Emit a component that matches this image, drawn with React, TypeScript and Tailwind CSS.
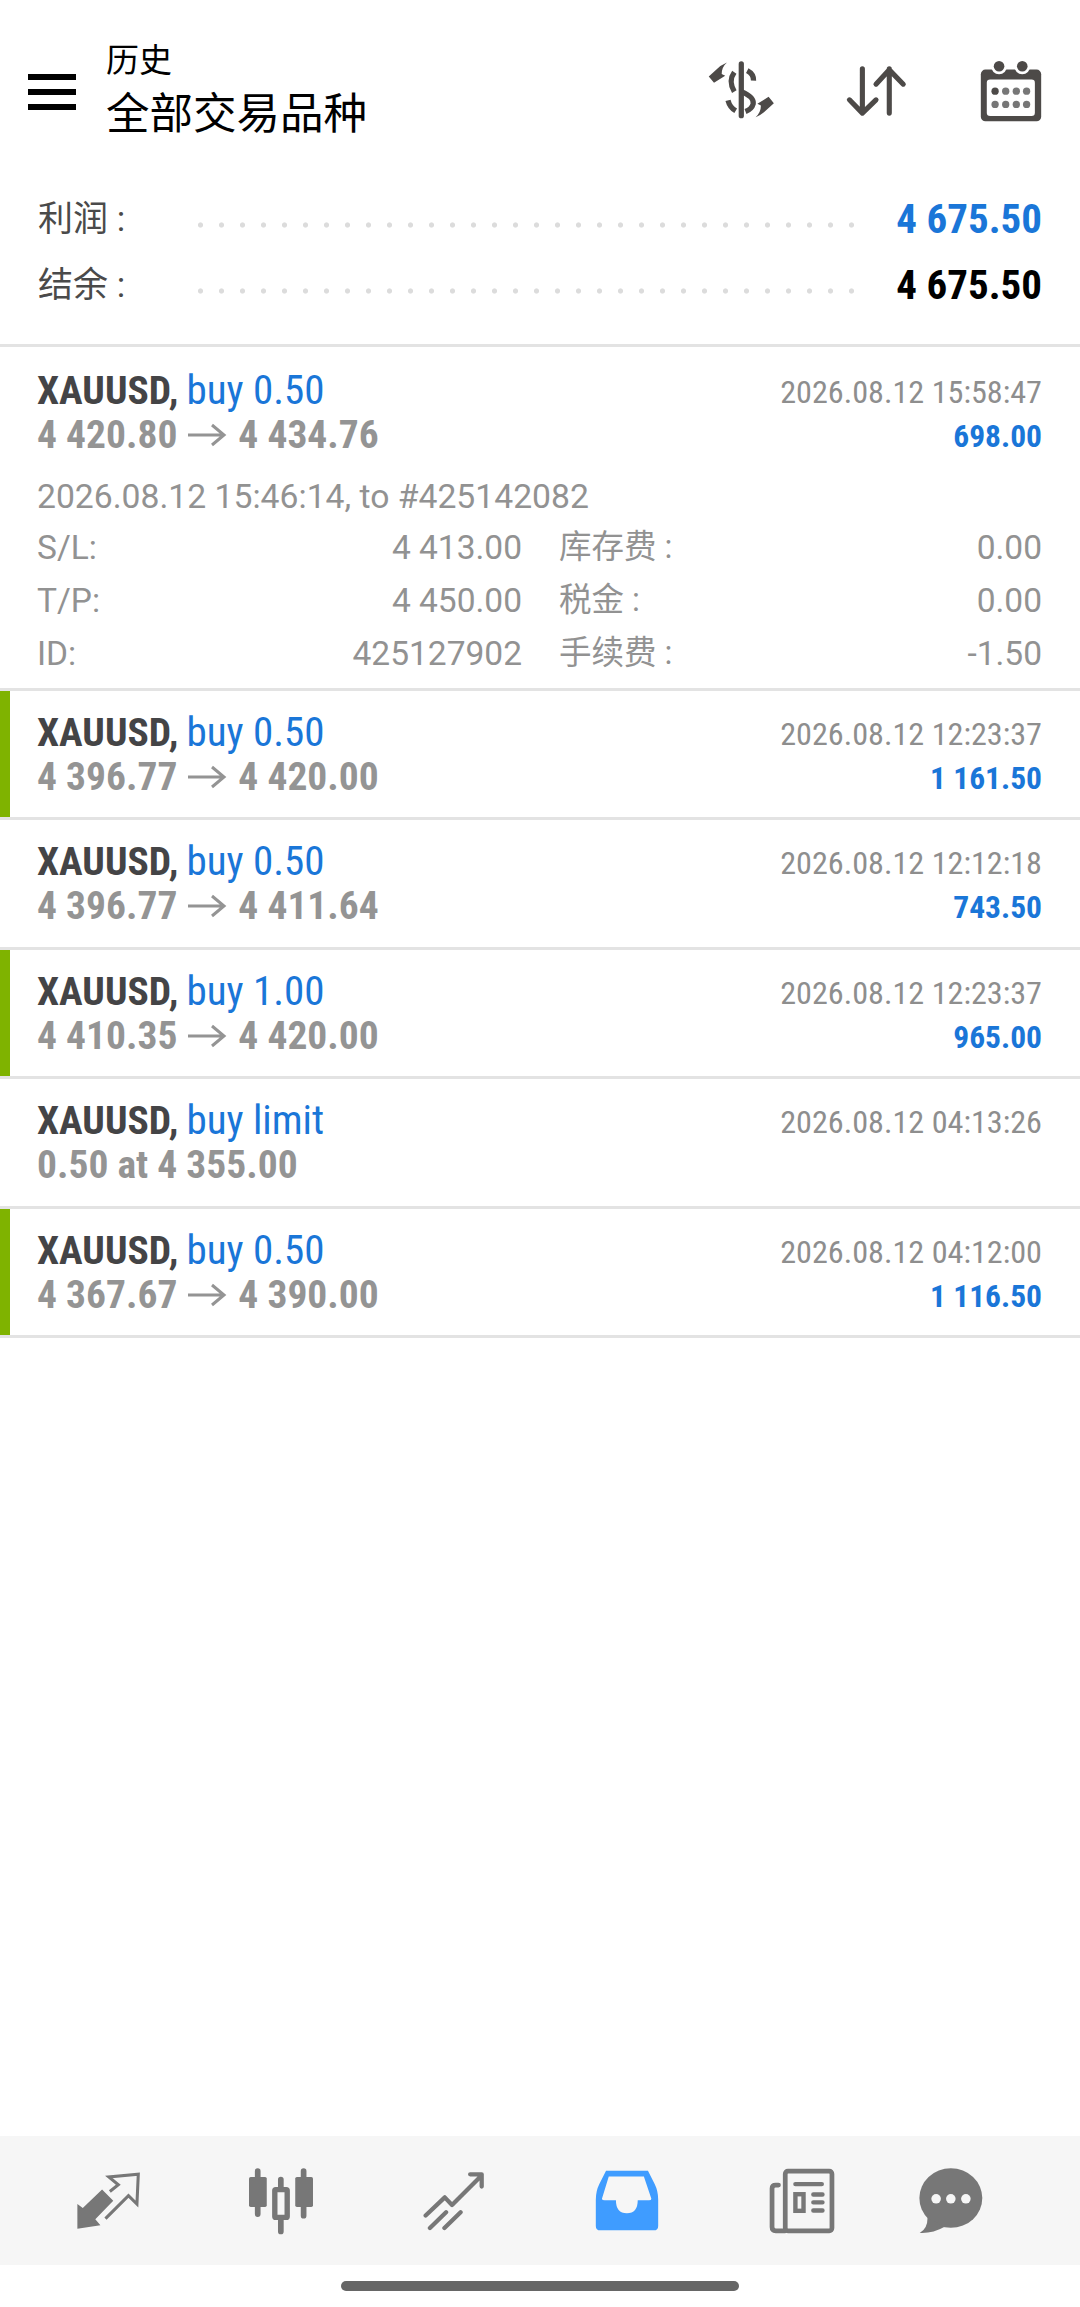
import React from 'react';

const cjk = '"Noto Sans CJK SC"';

interface Trade {
  side: string;
  time: string;
  from?: string;
  to?: string;
  plain?: string;
  profit?: string;
  bar?: boolean;
}

const trades: Trade[] = [
  { side: 'buy 0.50', time: '2026.08.12 12:23:37', from: '4 396.77', to: '4 420.00', profit: '1 161.50', bar: true },
  { side: 'buy 0.50', time: '2026.08.12 12:12:18', from: '4 396.77', to: '4 411.64', profit: '743.50' },
  { side: 'buy 1.00', time: '2026.08.12 12:23:37', from: '4 410.35', to: '4 420.00', profit: '965.00', bar: true },
  { side: 'buy limit', time: '2026.08.12 04:13:26', plain: '0.50 at 4 355.00' },
  { side: 'buy 0.50', time: '2026.08.12 04:12:00', from: '4 367.67', to: '4 390.00', profit: '1 116.50', bar: true },
];

function Arrow() {
  return (
    <svg width="40" height="24" viewBox="0 0 40 24" className="mr-[11px] ml-[10px] inline-block" fill="none" stroke="#949494" strokeWidth="3">
      <path d="M1 12H37M25 2L37 12L25 22" />
    </svg>
  );
}

function TradeHead({ trade }: { trade: Trade }) {
  return (
    <div className="flex justify-between">
      <div>
        <div className="h-[46px] text-[41px] leading-[46px] whitespace-nowrap">
          <span className="text-[39.5px] font-bold text-[#444446]">XAUUSD,</span>
          <span className="ml-[8px] text-[#1a76d8]">{trade.side}</span>
        </div>
        <div className="flex h-[44px] items-center text-[39.5px] leading-[44px] font-bold whitespace-nowrap text-[#949494]">
          {trade.plain ? trade.plain : (
            <>
              {trade.from}
              <Arrow />
              {trade.to}
            </>
          )}
        </div>
      </div>
      <div className="text-right">
        <div className="h-[46px] pt-[2px] text-[32.2px] leading-[46px] whitespace-nowrap text-[#8e8e8e]">{trade.time}</div>
        {trade.profit && (
          <div className="h-[44px] pt-[2px] text-[31.5px] leading-[44px] font-bold text-[#1a76d8]">{trade.profit}</div>
        )}
      </div>
    </div>
  );
}

function TradeRow({ trade }: { trade: Trade }) {
  return (
    <div className="flex h-[129.4px] border-b-[3px] border-[#e3e3e3] [font-stretch:75%]">
      <div className={`w-[10px] ${trade.bar ? 'bg-[#7fb300]' : ''}`} />
      <div className="flex-1 pt-[18px] pr-[38px] pl-[27px]">
        <TradeHead trade={trade} />
      </div>
    </div>
  );
}

function DetailRow({ label, value, label2, value2 }: { label: string; value: string; label2: string; value2: string }) {
  return (
    <div className="flex h-[53px] items-center text-[33.5px] text-[#929292]">
      <div className="flex w-[485px] justify-between">
        <span>{label}</span>
        <span>{value}</span>
      </div>
      <div className="ml-[37px] flex flex-1 justify-between">
        <span className="text-[32.5px]">{label2}</span>
        <span>{value2}</span>
      </div>
    </div>
  );
}

function SummaryRow({ label, value, color }: { label: string; value: string; color: string }) {
  return (
    <div className="flex h-[66px] items-center pr-[38px] pl-[38px]">
      <div className="w-[152px] text-[35px] text-[#4a4a4a]">{label}</div>
      <div className="mt-[10px] h-[6px] w-[672px] bg-[radial-gradient(circle,#dcdcdc_2.2px,transparent_3px)] bg-[length:21px_6px]" />
      <div className={`flex-1 text-right text-[41px] font-bold whitespace-nowrap [font-stretch:75%] ${color}`}>{value}</div>
    </div>
  );
}

function IconSwap() {
  return (
    <svg width="70" height="58" viewBox="80 68 200 165" fill="#4d4a48" className="mb-[4px]">
      <g fill="none" stroke="#4d4a48" strokeWidth="15">
        <path d="M178 76V224" strokeLinecap="round" />
        <path d="M195 95Q214 105 213 124M158 100Q140 125 158 155M178 155Q215 170 212 190Q208 205 190 212M140 180Q145 200 162 210" />
      </g>
      <path d="M85 112L107 92Q118 80 137 72Q122 85 122 105L132 110L100 130Z" />
      <path d="M271 188L249 208Q238 220 219 228Q234 215 234 195L224 190L256 170Z" />
    </svg>
  );
}

function IconSort() {
  return (
    <svg width="62" height="52" viewBox="495 78 182 150" fill="none" stroke="#4d4a48" strokeWidth="15" strokeLinecap="round" strokeLinejoin="round">
      <path d="M546 85V215M508 176L546 215L586 176M625 85V215M586 130L625 88L666 130" />
    </svg>
  );
}

function IconCalendar() {
  return (
    <svg width="62" height="63" viewBox="898 50 186 190" className="mb-[4px]">
      <rect x="900" y="82" width="182" height="156" rx="14" fill="#4d4a48" />
      <rect x="918" y="112" width="145" height="110" rx="10" fill="#fff" />
      <circle cx="955" cy="72" r="24" fill="#fff" />
      <circle cx="1025" cy="72" r="24" fill="#fff" />
      <circle cx="955" cy="72" r="16" fill="#4d4a48" />
      <circle cx="1025" cy="72" r="16" fill="#4d4a48" />
      {[147, 187].map((cy) =>
        [943, 975, 1007, 1038].map((cx) => <circle key={`${cx}-${cy}`} cx={cx} cy={cy} r="11" fill={cx === 943 && cy === 147 ? '#4d4a48' : '#777'} />),
      )}
    </svg>
  );
}

function NavTransfer() {
  return (
    <svg width="66" height="60" viewBox="215 155 195 172" fill="#777">
      <path d="M222 250L238 262L295 207L328 240L275 295L290 313L222 323Z" />
      <path d="M305 293L373 225L398 250L402 162L315 170L343 193L318 213" fill="none" stroke="#777" strokeWidth="9" />
    </svg>
  );
}

function NavCandles() {
  return (
    <svg width="66" height="68" viewBox="715 140 197 198" fill="#777">
      <path d="M744 150V278M813 175V330M881 150V283" stroke="#777" strokeWidth="17" strokeLinecap="round" />
      <rect x="718" y="167" width="53" height="90" rx="5" />
      <rect x="856" y="167" width="53" height="90" rx="5" />
      <rect x="795" y="205" width="37" height="83" rx="3" fill="#f6f6f6" stroke="#777" strokeWidth="16" />
    </svg>
  );
}

function NavTrend() {
  return (
    <svg width="64" height="60" viewBox="1220 145 192 182" fill="none" stroke="#777" strokeWidth="13" strokeLinecap="round" strokeLinejoin="round">
      <path d="M1230 280L1288 225L1310 248L1398 160M1365 155H1400V192M1243 318L1292 270M1287 318L1336 270" />
    </svg>
  );
}

function NavInbox() {
  return (
    <svg width="64" height="61" viewBox="160 148 187 179">
      <path d="M192 150H315L335 190Q345 210 345 235V312Q345 325 332 325H175Q162 325 162 312V235Q162 210 172 190Z" fill="#3f9cff" />
      <path d="M200 167H303L325 232Q325 237 318 237H285Q285 275 253 275Q221 275 221 237H188Q180 237 180 232Z" fill="#f6f6f6" />
    </svg>
  );
}

function NavNews() {
  return (
    <svg width="66" height="66" viewBox="662 140 195 194" fill="none" stroke="#777" strokeWidth="14" strokeLinecap="round">
      <rect x="710" y="149" width="138" height="176" rx="8" />
      <path d="M690 190H682Q671 190 671 200V314Q671 325 682 325H710" />
      <path d="M740 187H818M793 218H820M793 241H820M793 265H820" strokeWidth="13" />
      <rect x="740" y="217" width="24" height="49" strokeWidth="13" strokeLinecap="butt" />
    </svg>
  );
}

function NavChat() {
  return (
    <svg width="64" height="66" viewBox="1100 140 187 193" fill="#777">
      <ellipse cx="1193" cy="228" rx="92" ry="87" />
      <path d="M1125 285Q1125 318 1102 330Q1140 332 1175 312Z" />
      <circle cx="1150" cy="230" r="14" fill="#f6f6f6" />
      <circle cx="1193" cy="230" r="14" fill="#f6f6f6" />
      <circle cx="1237" cy="230" r="14" fill="#f6f6f6" />
    </svg>
  );
}

export default function App() {
  return (
    <div className="flex h-[2307px] w-[1080px] flex-col bg-white" style={{ fontFamily: `Roboto, ${cjk}, sans-serif` }}>
      <header className="flex h-[158px] items-center pt-[26px] pr-[38px] pl-[28px]">
        <div className="mr-[30px] flex h-[36px] w-[48px] flex-col justify-between">
          <div className="h-[6px] bg-black" />
          <div className="h-[6px] bg-black" />
          <div className="h-[6px] bg-black" />
        </div>
        <div className="flex-1">
          <div className="text-[33px] leading-[46px] text-black">历史</div>
          <div className="text-[43.5px] leading-[62px] text-black">全部交易品种</div>
        </div>
        <div className="flex items-center">
          <IconSwap />
          <div className="ml-[68px]"><IconSort /></div>
          <div className="ml-[73px]"><IconCalendar /></div>
        </div>
      </header>
      <section className="flex h-[186px] flex-col pt-[29px]">
        <SummaryRow label="利润 :" value="4 675.50" color="text-[#1a76d8]" />
        <SummaryRow label="结余 :" value="4 675.50" color="text-black" />
      </section>
      <div className="h-[347px] border-y-[3px] border-[#e3e3e3] pt-[20px] pr-[38px] pl-[37px]">
        <div className="[font-stretch:75%]">
          <TradeHead trade={{ side: 'buy 0.50', time: '2026.08.12 15:58:47', from: '4 420.80', to: '4 434.76', profit: '698.00' }} />
        </div>
        <div className="mt-[15px] h-[50px] text-[33.7px] leading-[50px] text-[#929292]">2026.08.12 15:46:14, to #425142082</div>
        <div>
          <DetailRow label="S/L:" value="4 413.00" label2="库存费 :" value2="0.00" />
          <DetailRow label="T/P:" value="4 450.00" label2="税金 :" value2="0.00" />
          <DetailRow label="ID:" value="425127902" label2="手续费 :" value2="-1.50" />
        </div>
      </div>
      {trades.map((trade, i) => (
        <TradeRow key={i} trade={trade} />
      ))}
      <div className="flex-1" />
      <nav className="flex h-[129px] items-center bg-[#f6f6f6] pl-[21px]">
        <div className="flex w-[173px] justify-center"><NavTransfer /></div>
        <div className="flex w-[173px] justify-center"><NavCandles /></div>
        <div className="flex w-[173px] justify-center"><NavTrend /></div>
        <div className="flex w-[173px] justify-center"><NavInbox /></div>
        <div className="flex w-[178px] justify-center"><NavNews /></div>
        <div className="flex w-[119px] justify-center"><NavChat /></div>
      </nav>
      <div className="flex h-[42px] items-start justify-center pt-[16px]">
        <div className="h-[10px] w-[398px] rounded-full bg-[#666]" />
      </div>
    </div>
  );
}
